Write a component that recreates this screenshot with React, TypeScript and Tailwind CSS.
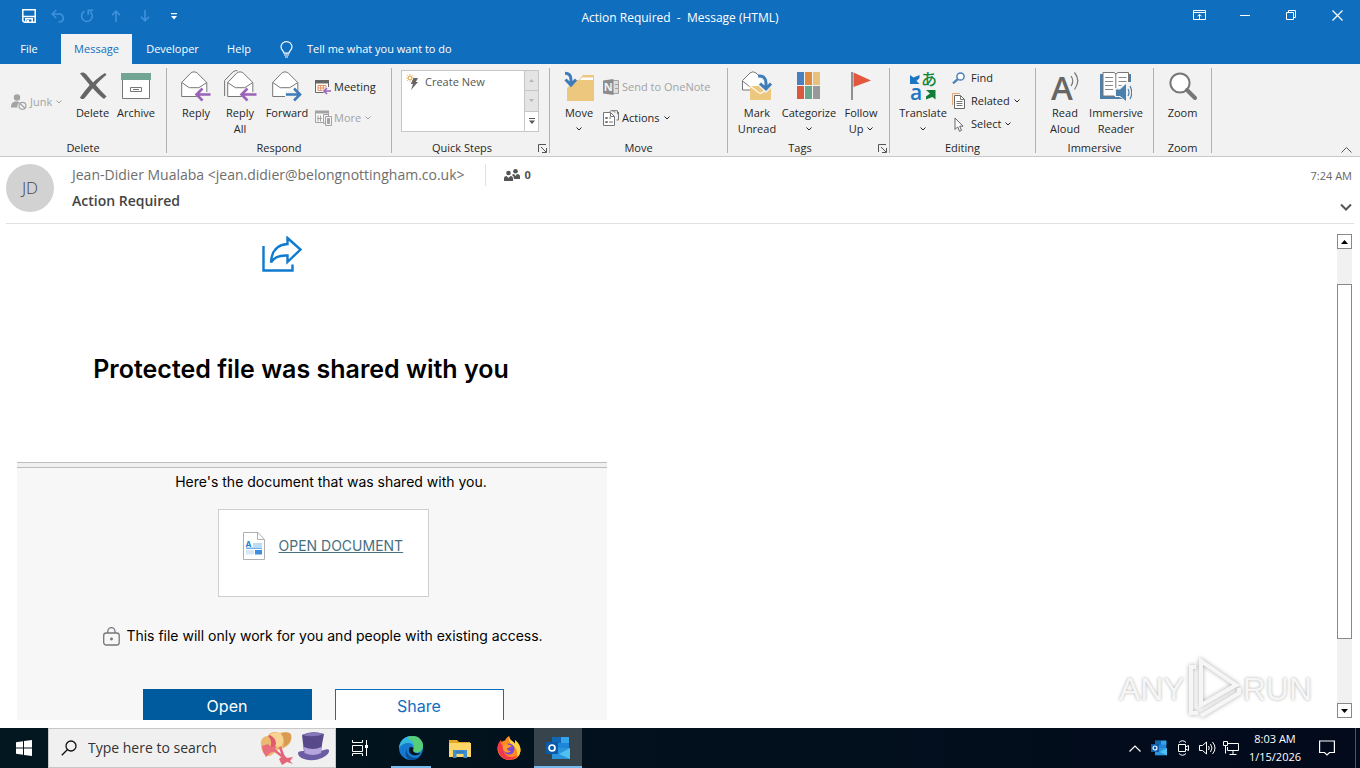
import React, { useState } from "react";
import clsx from "clsx";

interface IconProps {
  className?: string;
}

/* ---------- title bar icons ---------- */

const SaveIcon = () => (
  <svg width="14" height="14" viewBox="0 0 14 14" fill="none" stroke="#fff" strokeWidth="1.5">
    <path d="M.8.8h12.4v12.4H2.4L.8 11.8z" />
    <path d="M1 7.5h12" />
    <path d="M3.8 13V9.8h6.4V13" />
    <path d="M6 11v2" strokeWidth="2" />
  </svg>
);

const UndoIcon = () => (
  <svg width="14" height="14" viewBox="0 0 14 14" fill="none" stroke="#3f92da" strokeWidth="1.6">
    <path d="M5.2 1 1.2 5l4 4" />
    <path d="M1.5 5h7a4 4 0 0 1 1 7.8L7.5 13" />
  </svg>
);

const RedoIcon = () => (
  <svg width="14" height="14" viewBox="0 0 14 14" fill="none" stroke="#3f92da" strokeWidth="1.6">
    <path d="M4.6 2.2a5.4 5.4 0 1 0 5.6.6" />
    <path d="M8.2 6V1.4h5" />
  </svg>
);

const ArrowUp = () => (
  <svg width="10" height="12" viewBox="0 0 10 12" fill="none" stroke="#3f92da" strokeWidth="1.6">
    <path d="M5 12V1.5M1 5.2 5 1.2l4 4" />
  </svg>
);

const ArrowDown = () => (
  <svg width="10" height="12" viewBox="0 0 10 12" fill="none" stroke="#3f92da" strokeWidth="1.6">
    <path d="M5 0v10.5M1 6.8l4 4 4-4" />
  </svg>
);

const CustomizeIcon = () => (
  <svg width="6" height="7" viewBox="0 0 6 7">
    <path d="M0 0h6v1.2H0zM0 3h6L3 6.5z" fill="#fff" />
  </svg>
);

const BulbIcon = () => (
  <svg width="13" height="17" viewBox="0 0 13 17" fill="none" stroke="#fff" strokeWidth="1.2">
    <path d="M4 12.2c0-2.2-3-3.2-3-6.4a5.5 5.2 0 0 1 11 0c0 3.2-3 4.2-3 6.4z" />
    <path d="M4 14h5M5 16h3" />
  </svg>
);

/* ---------- ribbon icons ---------- */

const JunkIcon = () => (
  <svg width="16" height="16" viewBox="0 0 16 16">
    <circle cx="6" cy="3.5" r="3.2" fill="#a3a3a3" />
    <path d="M0 13.5C0 9 2 7.5 5.5 7.5c1.5 0 2.5.3 3.2.8A5 5 0 0 0 6.5 13.5z" fill="#a3a3a3" />
    <circle cx="11.5" cy="11.8" r="3.5" fill="#f2f2f2" stroke="#a3a3a3" strokeWidth="1.2" />
    <path d="m9 9.5 5 4.8" stroke="#a3a3a3" strokeWidth="1.2" />
  </svg>
);

const DeleteIcon = () => (
  <svg width="30" height="28" viewBox="0 0 30 28">
    <path
      d="M2 1.5C4-.2 6.500.5 8 2c2.5 3 4.500 5.800 7 8.500 3.500-3.200 7-6.500 12-9.500l1.500 1.800C24.500 6 21 9.300 17.800 13c3.200 3.800 6.700 7.500 10.700 11.500L26 27c-4.300-3.300-8-7-11.300-10.800-3 3.200-5.200 6.500-8.200 10-1.500 1.500-4.200.8-4.500-.7C5 21 8.500 17 11.700 13 8.500 9.200 5.500 5.200 2 1.500z"
      fill="#666"
    />
  </svg>
);

const ArchiveIcon = () => (
  <svg width="30" height="26" viewBox="0 0 30 26">
    <path d="M1.5 6.5h27v19h-27z" fill="#fff" stroke="#777" />
    <path d="M0 0h30v7H0z" fill="#72a594" />
    <path d="M9.5 14.5h11v4h-11zM12 16.5h6" fill="none" stroke="#777" />
  </svg>
);

const Envelope = () => (
  <>
    <path d="M.7 11.5 9.5 2.3c2-1.900 5-1.900 7 0l9.3 9.200v14H.7z" fill="#fff" stroke="#777" />
    <path d="m.7 11.5 7.600 5.200h9.500l8-5.200" fill="none" stroke="#777" />
  </>
);

const ReplyIcon = () => (
  <svg width="30" height="31" viewBox="0 0 30 31">
    <Envelope />
    <path d="M14 23.5 21 16v5h9v5h-9v5z" fill="#f2f2f2" />
    <path d="M29.5 23.5H16M21.5 17.5l-6 6 6 6" fill="none" stroke="#9a62b8" strokeWidth="2.6" />
  </svg>
);

const ReplyAllIcon = () => (
  <svg width="33" height="32" viewBox="0 0 33 32">
    <path d="M.6 26V10.5L9 1.8Q11 .2 13.5.7" fill="none" stroke="#777" />
    <g transform="translate(3 1)">
      <Envelope />
      <path d="M13 23.5 20 16v5h9v5h-9v5z" fill="#f2f2f2" />
    </g>
    <path d="M32.5 24.5H18M23.5 18.5l-6 6 6 6" fill="none" stroke="#9a62b8" strokeWidth="2.6" />
  </svg>
);

const ForwardIcon = () => (
  <svg width="30" height="31" viewBox="0 0 30 31">
    <Envelope />
    <path d="M30 23.5 22 16v4h-9v7h9v4z" fill="#f2f2f2" />
    <path d="M14 23.5h14M22 17.5l6 6-6 6" fill="none" stroke="#3f7cb8" strokeWidth="2.6" />
  </svg>
);

const MeetingIcon = () => (
  <svg width="16" height="15" viewBox="0 0 16 15">
    <path d="M.5 1.5h13v11H.5z" fill="#fff" stroke="#666" />
    <path d="M0 0h14v3.500H0z" fill="#666" />
    <path d="M3 5.500h8v5H3zM5.700 5.500v5M8.300 5.500v5M3 8h8" fill="none" stroke="#e08f5e" />
    <path d="M7 10.800 11 7h5v8h-5z" fill="#f2f2f2" />
    <path d="M16 11H9.200M12 8l-3 3 3 3" fill="none" stroke="#9a62b8" strokeWidth="1.6" />
  </svg>
);

const MoreIcon = () => (
  <svg width="17" height="16" viewBox="0 0 17 16" fill="none" stroke="#a3a3a3">
    <path d="M.5 1.5h13v11H.5z" fill="#f8f8f8" />
    <path d="M0 2h14" strokeWidth="3" />
    <path d="M3 5.500v6M5.500 5.500v6M2 8.500h5" />
    <path d="M8.500 4.500h5v9h-5z" fill="#f2f2f2" />
    <path d="M10.500 6.500h6v9h-6z" fill="#f2f2f2" />
    <path d="M12.500 8.500h2v5h-2z" fill="#a3a3a3" />
  </svg>
);

const QuickStepIcon = () => (
  <svg width="13" height="16" viewBox="0 0 13 16">
    <path d="M4 0v8M0 4h8M1.200 1.200l5.600 5.600M6.800 1.200 1.200 6.800" stroke="#e8b566" />
    <circle cx="4" cy="4" r="1.7" fill="#fff" stroke="#e8b566" />
    <path d="M7.500 4h4.500L9.800 8H12l-7 8 2-6H4.800z" fill="#666" />
  </svg>
);

const LauncherIcon = () => (
  <svg width="9" height="9" viewBox="0 0 9 9" fill="none" stroke="#555">
    <path d="M.5 8V.5H8M3 3l5 5M8.500 4v4.500H4" />
  </svg>
);

const MoveIcon = () => (
  <svg width="31" height="31" viewBox="0 0 31 31">
    <path d="M3 9h12l4-5h11v26H3z" fill="#edc77e" />
    <path d="M18 6.500h11V9H16z" fill="#fff" />
    <path d="M12 8 3 17v-7H0V0h10z" fill="#f2f2f2" />
    <path d="M1 2.300c4 0 6 2.500 6 6.500v4M1.500 8.500 7 14l5-5.500" fill="none" stroke="#3f7cb8" strokeWidth="3" />
  </svg>
);

const OneNoteIcon = () => (
  <svg width="16" height="16" viewBox="0 0 16 16">
    <path d="M9 1.500h6.500v13H9z" fill="#ddd" stroke="#a3a3a3" />
    <path d="M12 5.500h3.500M12 9.500h3.500" stroke="#a3a3a3" />
    <path d="M0 1.500 10.500 0v16L0 14.500z" fill="#8c8c8c" />
    <text x="5.200" y="12" textAnchor="middle" fontSize="11" fontWeight="700" fill="#f2f2f2">
      N
    </text>
  </svg>
);

const ActionsIcon = () => (
  <svg width="16" height="16" viewBox="0 0 16 16" fill="none" stroke="#777">
    <path d="M6 2.500c2-2.500 5-2.500 6 0M15.500 2v8h-2" />
    <path d="M9 .7h5.500V4" />
    <path d="M.5 2.500h7l4 4v9H.5z" fill="#fff" />
    <path d="M7.500 2.500v4h4" />
    <path d="M2.500 7.500h2v1h-2zM2.500 11.500h2v1h-2zM6 8h2M6 12h4" />
  </svg>
);

const MarkUnreadIcon = () => (
  <svg width="30" height="30" viewBox="0 0 30 30">
    <path d="M.5 9.500 8 2q3-2.500 6 0l9 8v9H.5z" fill="#fff" stroke="#777" />
    <path d="m.5 10 7 5.500H10" fill="none" stroke="#777" />
    <path d="M8 15h21v14H8z" fill="#edc77e" />
    <path d="m8 15 8.500 6.500q2 1.500 4 0L29 15" fill="none" stroke="#fff8e8" strokeWidth="1.5" />
    <path d="M16 5c5-.5 8 2 8 7v5M17.500 12.500l6.500 6 5.500-6" fill="none" stroke="#f2f2f2" strokeWidth="5" />
    <path d="M16 5c5-.5 8 2 8 7v4M18 12.500l6 5.500 5-5.500" fill="none" stroke="#3f7cb8" strokeWidth="3" />
  </svg>
);

const CategorizeIcon = () => (
  <svg width="24" height="28" viewBox="0 0 24 28">
    <path d="M0 0h7v13H0z" fill="#4a7fbd" />
    <path d="M8 0h7v13H8z" fill="#e08b3f" />
    <path d="M16 0h7v13h-7z" fill="#e8c27a" />
    <path d="M0 14h7v13H0z" fill="#d9583f" />
    <path d="M8 14h7v13H8z" fill="#69a58c" />
    <path d="M16 14h7v13h-7z" fill="#999" />
  </svg>
);

const FlagIcon = () => (
  <svg width="20" height="28" viewBox="0 0 20 28">
    <path d="M1 0v28" stroke="#777" strokeWidth="1.6" />
    <path d="M2.500.5 20 8.500 2.500 15z" fill="#e2573d" />
  </svg>
);

const TranslateIcon = () => (
  <svg width="28" height="32" viewBox="0 0 28 32" className="overflow-visible">
    <path d="m1 5 3.500 2.500L10.500 5v3L7.500 11l3 3H1z" fill="#1c74c4" />
    <path d="M17 20h9.500v9.500L23.500 27l-6.500 2.500v-3l4-3z" fill="#0f7f35" />
    <text x="1" y="30" fontSize="21" fontWeight="600" fill="#1c74c4">
      a
    </text>
    <text x="12" y="15" fontSize="16" fontFamily="Noto Sans CJK JP, sans-serif" fontWeight="500" fill="#17883c">
      あ
    </text>
  </svg>
);

const FindIcon = () => (
  <svg width="13" height="12" viewBox="0 0 13 12" fill="none" stroke="#4a7fbd">
    <circle cx="8.500" cy="4.500" r="3.6" fill="#fff" strokeWidth="1.5" />
    <path d="M5.800 7.200 1 11.300" strokeWidth="2.3" />
  </svg>
);

const RelatedIcon = () => (
  <svg width="13" height="16" viewBox="0 0 13 16" fill="none">
    <path d="M.5 12V.5H8" stroke="#e5a673" />
    <path d="M2.500 2.500h6l4 4v9h-10z" fill="#fff" stroke="#666" />
    <path d="M8.500 2.500v4h4M4.500 8.500h6M4.500 10.500h6M4.500 12.500h6" stroke="#777" />
  </svg>
);

const SelectIcon = () => (
  <svg width="13" height="15" viewBox="0 0 13 15" fill="#fff" stroke="#666">
    <path d="M3 1v11.500l2.700-2.700 1.800 4.500 2-.9-1.800-4.200H11z" />
  </svg>
);

const ReadAloudIcon = () => (
  <svg width="28" height="29" viewBox="0 0 28 29" className="overflow-visible">
    <text x="0" y="28" fontSize="33" fontWeight="600" fill="#666">
      A
    </text>
    <path d="M20 4q3.500 5 0 10M23.500.5q6.500 8 0 17" fill="none" stroke="#777" strokeWidth="1.2" />
  </svg>
);

const ImmersiveIcon = () => (
  <svg width="32" height="29" viewBox="0 0 32 29">
    <path d="M0 2h31v25H0z" fill="#4a7fae" />
    <path d="M3 .5h11l2 1.500 2-1.500h10.500V24H18l-2 1.500L14 24H3z" fill="#fff" stroke="#777" />
    <path d="M15.800 2v23" stroke="#777" />
    <path d="M5 5.500h8M5 9.500h8M5 13.500h8M5 17.500h8M18.500 5.500h8M18.500 9.500h8M18.500 13.500h3" stroke="#888" />
    <path d="M15 16h4l8-6h5v19h-5l-8-4h-4z" fill="#f2f2f2" />
    <path d="M16 17.500h4l6-5.500v17l-6-5h-4z" fill="#4a7fae" />
    <path d="M28 17q2 3.500 0 7M30 14q3.500 6.500 0 13" fill="none" stroke="#4a7fae" strokeWidth="1.2" />
  </svg>
);

const ZoomIcon = () => (
  <svg width="28" height="28" viewBox="0 0 28 28">
    <circle cx="11" cy="11" r="9.600" fill="#fff" stroke="#777" strokeWidth="2" />
    <path d="m18 18 8 8" stroke="#777" strokeWidth="4" strokeLinecap="round" />
  </svg>
);

const Chevron = ({ className }: IconProps) => (
  <svg width="6" height="4" viewBox="0 0 6 4" fill="none" stroke="currentColor" className={className}>
    <path d="m.5.5 2.500 2.500L5.500.5" />
  </svg>
);

/* ---------- ribbon building blocks ---------- */

interface RibbonGroupProps {
  label: string;
  className: string;
  launcher?: boolean;
  children: React.ReactNode;
}

const RibbonGroup = ({ label, className, launcher, children }: RibbonGroupProps) => (
  <section
    aria-label={label}
    className={clsx("flex shrink-0 flex-col justify-between border-r border-[#b1b1b1] pt-0.5", className)}
  >
    <div className="flex items-start">{children}</div>
    <div className="flex items-center leading-[10px]">
      <span className="flex-1 text-center">{label}</span>
      {launcher && (
        <button aria-label={`${label} options`} className="w-[17px] pl-1.5">
          <LauncherIcon />
        </button>
      )}
    </div>
  </section>
);

interface BigButtonProps {
  icon: React.ReactNode;
  lines: string[];
  className: string;
  menu?: boolean;
}

const BigButton = ({ icon, lines, className, menu }: BigButtonProps) => (
  <button className={clsx("flex shrink-0 flex-col items-center gap-[3px] leading-4", className)}>
    <span className="flex h-8 items-center justify-center">{icon}</span>
    <span className="flex flex-col items-center">
      {lines.map((line, index) => (
        <span key={line} className="flex items-center gap-1 whitespace-nowrap">
          {line}
          {menu && lines.length > 1 && index === lines.length - 1 && <Chevron />}
        </span>
      ))}
      {menu && lines.length === 1 && (
        <span className="flex h-4 items-center">
          <Chevron />
        </span>
      )}
    </span>
  </button>
);

interface SmallButtonProps {
  icon: React.ReactNode;
  label: string;
  menu?: boolean;
  disabled?: boolean;
}

const SmallButton = ({ icon, label, menu, disabled }: SmallButtonProps) => (
  <button
    disabled={disabled}
    className={clsx("flex items-center whitespace-nowrap leading-4", disabled && "text-[#a3a3a3]")}
  >
    <span className="flex w-[19px] shrink-0">{icon}</span>
    {label}
    {menu && <Chevron className="ml-1" />}
  </button>
);

const TitleBar = () => {
  const quickAccess = [
    { name: "Save", icon: <SaveIcon /> },
    { name: "Undo", icon: <UndoIcon /> },
    { name: "Redo", icon: <RedoIcon /> },
    { name: "Previous item", icon: <ArrowUp /> },
    { name: "Next item", icon: <ArrowDown /> },
    { name: "Customize toolbar", icon: <CustomizeIcon /> },
  ];

  return (
    <div className="grid h-[34px] grid-cols-[1fr_auto_1fr] bg-[#106ebe] text-white">
      <div className="flex h-8 pl-3.5">
        {quickAccess.map((item) => (
          <button key={item.name} aria-label={item.name} className="flex w-[29px] items-center justify-center">
            {item.icon}
          </button>
        ))}
      </div>
      <h1 className="whitespace-pre text-xs leading-9">Action Required  -  Message (HTML)</h1>
      <div className="flex h-[30px] justify-end">
        <button aria-label="Ribbon display options" className="flex w-[46px] items-center justify-center">
          <svg width="13" height="10" viewBox="0 0 13 10" fill="none" stroke="#fff">
            <path d="M.5.5h12v9H.5zM.5 2.500h12M6.500 9V4.500M4.500 6.300l2-2 2 2" />
          </svg>
        </button>
        <button aria-label="Minimize" className="flex w-[46px] items-center justify-center">
          <span className="h-px w-2.5 bg-white"></span>
        </button>
        <button aria-label="Restore" className="flex w-[46px] items-center justify-center">
          <svg width="10" height="10" viewBox="0 0 10 10" fill="none" stroke="#fff">
            <path d="M.5 2.500h7v7h-7zM2.500 2.500v-2h7v7h-2" />
          </svg>
        </button>
        <button aria-label="Close" className="flex w-[46px] items-center justify-center">
          <svg width="11" height="11" viewBox="0 0 11 11" fill="none" stroke="#fff" strokeWidth="1.2">
            <path d="m.5.5 10 10M10.500.5l-10 10" />
          </svg>
        </button>
      </div>
    </div>
  );
};

const TabBar = () => {
  const [active, setActive] = useState("Message");
  const tabs = [
    { name: "File", width: "w-[58px] mr-[3px]" },
    { name: "Message", width: "w-[71px]" },
    { name: "Developer", width: "w-[81px]" },
    { name: "Help", width: "w-[52px]" },
  ];

  return (
    <nav className="flex h-[30px] bg-[#106ebe] text-white">
      {tabs.map((tab) => (
        <button
          key={tab.name}
          onClick={() => setActive(tab.name)}
          className={clsx(tab.width, active === tab.name && "bg-[#f2f2f2] text-[#106ebe]")}
        >
          {tab.name}
        </button>
      ))}
      <label className="ml-[15px] flex items-center gap-3.5">
        <BulbIcon />
        <input
          aria-label="Tell me what you want to do"
          placeholder="Tell me what you want to do"
          className="w-44 bg-transparent placeholder:text-white placeholder:opacity-100 focus:outline-none"
        />
      </label>
    </nav>
  );
};

const Ribbon = () => (
  <div className="flex h-[93px] items-stretch border-b border-[#c8c8c8] bg-[#f2f2f2] pb-[3px] pt-1 text-[#262626]">
    <RibbonGroup label="Delete" className="w-[167px]">
      <div className="flex h-16 w-[71px] shrink-0 items-center pl-[11px]">
        <SmallButton icon={<JunkIcon />} label="Junk" menu disabled />
      </div>
      <BigButton icon={<DeleteIcon />} lines={["Delete"]} className="w-[43px]" />
      <BigButton icon={<ArchiveIcon />} lines={["Archive"]} className="w-11" />
    </RibbonGroup>

    <RibbonGroup label="Respond" className="w-[225px]">
      <div className="flex pl-[7px]">
        <BigButton icon={<ReplyIcon />} lines={["Reply"]} className="w-11" />
        <BigButton icon={<ReplyAllIcon />} lines={["Reply", "All"]} className="w-11" />
        <BigButton icon={<ForwardIcon />} lines={["Forward"]} className="w-[50px]" />
      </div>
      <div className="flex flex-col gap-[15px] pl-[3px] pt-[9px]">
        <SmallButton icon={<MeetingIcon />} label="Meeting" />
        <SmallButton icon={<MoreIcon />} label="More" menu disabled />
      </div>
    </RibbonGroup>

    <RibbonGroup label="Quick Steps" className="w-[158px]" launcher>
      <div className="ml-[9px] flex h-[62px] w-[138px] border border-[#c6c6c6] bg-white">
        <button className="flex h-[22px] flex-1 items-center gap-1.5 pl-1 text-[#555]">
          <QuickStepIcon />
          Create New
        </button>
        <div className="flex w-3.5 flex-col divide-y divide-[#c6c6c6] border-l border-[#c6c6c6] text-[#666]">
          <button aria-label="Previous row" className="flex flex-1 items-center justify-center bg-[#e4e4e4]">
            <svg width="5" height="3" viewBox="0 0 5 3">
              <path d="M0 3 2.500 0 5 3z" fill="#b5b5b5" />
            </svg>
          </button>
          <button aria-label="Next row" className="flex flex-1 items-center justify-center bg-[#e4e4e4]">
            <svg width="5" height="3" viewBox="0 0 5 3">
              <path d="m0 0 2.500 3L5 0z" fill="#b5b5b5" />
            </svg>
          </button>
          <button aria-label="More quick steps" className="flex flex-1 items-center justify-center">
            <svg width="6" height="6" viewBox="0 0 6 6">
              <path d="M0 0h6v1H0zM0 2.500h6L3 6z" fill="#555" />
            </svg>
          </button>
        </div>
      </div>
    </RibbonGroup>

    <RibbonGroup label="Move" className="w-[178px]">
      <div className="flex pl-[7px]">
        <BigButton icon={<MoveIcon />} lines={["Move"]} className="w-11" menu />
      </div>
      <div className="flex flex-col gap-[15px] pl-0.5 pt-[9px]">
        <SmallButton icon={<OneNoteIcon />} label="Send to OneNote" disabled />
        <SmallButton icon={<ActionsIcon />} label="Actions" menu />
      </div>
    </RibbonGroup>

    <RibbonGroup label="Tags" className="w-[162px]" launcher>
      <div className="flex pl-[7px]">
        <BigButton icon={<MarkUnreadIcon />} lines={["Mark", "Unread"]} className="w-11" />
        <BigButton icon={<CategorizeIcon />} lines={["Categorize"]} className="w-[60px]" menu />
        <BigButton icon={<FlagIcon />} lines={["Follow", "Up"]} className="w-11" menu />
      </div>
    </RibbonGroup>

    <RibbonGroup label="Editing" className="w-[146px]">
      <div className="flex pl-[7px]">
        <BigButton icon={<TranslateIcon />} lines={["Translate"]} className="w-[52px]" menu />
      </div>
      <div className="flex flex-col gap-[7px] pl-[3px]">
        <SmallButton icon={<FindIcon />} label="Find" />
        <SmallButton icon={<RelatedIcon />} label="Related" menu />
        <SmallButton icon={<SelectIcon />} label="Select" menu />
      </div>
    </RibbonGroup>

    <RibbonGroup label="Immersive" className="w-[118px]">
      <div className="flex pl-[7px]">
        <BigButton icon={<ReadAloudIcon />} lines={["Read", "Aloud"]} className="w-11" />
        <BigButton icon={<ImmersiveIcon />} lines={["Immersive", "Reader"]} className="w-[58px]" />
      </div>
    </RibbonGroup>

    <RibbonGroup label="Zoom" className="w-[58px]">
      <BigButton icon={<ZoomIcon />} lines={["Zoom"]} className="w-full" />
    </RibbonGroup>

    <button aria-label="Collapse the ribbon" className="ml-auto self-end pr-2">
      <svg width="11" height="6" viewBox="0 0 11 6" fill="none" stroke="#555">
        <path d="m.5 5.500 5-5 5 5" />
      </svg>
    </button>
  </div>
);

const MessageHeader = () => (
  <header className="mx-1.5 flex h-[67px] border-b border-[#e1e1e1] pt-[7px]">
    <div className="flex size-12 items-center justify-center rounded-full bg-[#d2d2d2] text-[17px] font-light text-[#444]">
      JD
    </div>
    <div className="ml-[18px]">
      <div className="flex items-center">
        <span className="text-sm leading-[22px] text-[#6e6e6e]">
          Jean-Didier Mualaba &lt;jean.didier@belongnottingham.co.uk&gt;
        </span>
        <button className="ml-5 flex items-center gap-1 border-l border-[#e1e1e1] pl-[18px] font-bold leading-[22px] text-[#555]">
          <svg width="17" height="12" viewBox="0 0 17 12" fill="#555">
            <circle cx="4.500" cy="4" r="2.3" />
            <path d="M0 12V9.500Q0 7 2.500 7L4.500 9l2-2Q9 7 9 9.500V12z" />
            <circle cx="11.500" cy="2.300" r="2.3" />
            <path d="M8 6q1-1 2-1l1.500 2L13 5q3 0 3 2.500V10h-6Q10 7 8 6z" />
          </svg>
          0
        </button>
      </div>
      <h2 className="pt-[3px] text-sm font-semibold leading-6 text-[#444]">Action Required</h2>
    </div>
    <div className="ml-auto flex flex-col items-end justify-between pb-3 pr-0.5 text-[#666]">
      <time className="leading-6">7:24 AM</time>
      <button aria-label="Expand header">
        <svg width="12" height="8" viewBox="0 0 12 8" fill="none" stroke="#555" strokeWidth="2">
          <path d="m1 1.500 5 5 5-5" />
        </svg>
      </button>
    </div>
  </header>
);

const ShareIcon = () => (
  <svg width="40" height="36" viewBox="0 0 40 36" fill="none" stroke="#0f7bd0" strokeWidth="2.4">
    <path d="M1.500 10v24.500h29v-6" />
    <path d="M25.500 2 38.500 13.500l-13 12.500v-6.500C17 19 12 21 9 26.500 9.500 15 15.500 8.500 25.500 8z" />
  </svg>
);

const DocumentIcon = () => (
  <svg width="22" height="28" viewBox="0 0 22 28">
    <path d="M.5.5h14.500l6.500 7v20H.5z" fill="#fff" stroke="#b0b0b0" />
    <path d="M14.500.5v7h7" fill="none" stroke="#b0b0b0" />
    <text x="2.500" y="15" fontSize="8" fontWeight="700" fill="#1e7fd0">
      A
    </text>
    <path d="M10 11h9v4h-9z" fill="#bcdcf7" />
    <path d="M3 15.500h16V17H3z" fill="#6fb1ea" />
    <path d="M3 18h8v4.500H3z" fill="#d8e8f5" />
    <path d="M12 18h7v4.500h-7z" fill="#3f8edb" />
  </svg>
);

const LockIcon = () => (
  <svg width="17" height="19" viewBox="0 0 17 19" fill="none" stroke="#777" strokeWidth="1.3">
    <rect x=".7" y="6" width="15.500" height="12" rx="2.500" />
    <path d="M4.800 6V4.200a3.600 3.600 0 0 1 7.200 0V6" />
    <circle cx="8.500" cy="12" r=".8" fill="#555" />
  </svg>
);

const MessageBody = () => (
  <article className="flex-1 overflow-hidden pl-[17px] pt-3 font-[Inter,sans-serif] text-black">
    <div className="w-[590px]">
      <div className="flex h-9 w-[530px] justify-center">
        <ShareIcon />
      </div>
      <h2 className="mt-[81px] w-[568px] text-center text-[25px] font-semibold leading-8">
        Protected file was shared with you
      </h2>
      <div className="mt-[77px] h-1.5 border-y border-[#bdbdbd] bg-[#f0f0f0]"></div>
      <div className="flex flex-col items-center bg-[#f7f7f7] pb-10 pl-[22px] text-[14px]">
        <p className="pl-4 pt-1 leading-5">Here's the document that was shared with you.</p>
        <div className="mt-[17px] flex h-[88px] w-[211px] items-start gap-3.5 border border-[#cfcfcf] bg-white pl-6 pt-[22px]">
          <DocumentIcon />
          <a href="#" className="leading-7 text-[#48707f] underline">
            OPEN DOCUMENT
          </a>
        </div>
        <p className="mt-[29px] flex items-center gap-1.5 leading-5">
          <LockIcon />
          This file will only work for you and people with existing access.
        </p>
        <div className="mt-[43px] flex gap-[23px] text-[16px]">
          <button className="h-9 w-[169px] bg-[#005a9e] pb-0.5 text-white">Open</button>
          <button className="h-9 w-[169px] border border-[#106ebe] bg-white pb-0.5 text-[#106ebe]">Share</button>
        </div>
      </div>
    </div>
  </article>
);

const Scrollbar = () => (
  <div className="mb-0.5 mr-2 mt-2.5 flex w-[15px] flex-col bg-[#f1f1f1]">
    <button aria-label="Scroll up" className="flex size-[15px] items-center justify-center border border-[#888] bg-white">
      <svg width="7" height="4" viewBox="0 0 7 4">
        <path d="M0 4 3.500 0 7 4z" />
      </svg>
    </button>
    <div className="mt-[35px] flex-1 border border-[#888] bg-white"></div>
    <button
      aria-label="Scroll down"
      className="mt-16 flex size-[15px] items-center justify-center border border-[#888] bg-white"
    >
      <svg width="7" height="4" viewBox="0 0 7 4">
        <path d="m0 0 3.500 4L7 0z" />
      </svg>
    </button>
  </div>
);

const Watermark = () => (
  <div className="pointer-events-none absolute bottom-0 right-12 flex items-center font-['Liberation_Sans',sans-serif] text-[32px] leading-[62px] text-[#f6f6f6] text-shadow-[0_0_3px_#aaa]">
    <span>ANY</span>
    <svg
      width="58"
      height="62"
      viewBox="-2 0 58 62"
      fill="none"
      stroke="#f6f6f6"
      strokeWidth="4"
      className="drop-shadow-[0_0_2px_#aaa]"
    >
      <path d="M14 3v44l35-20z" />
      <path d="M9 9H4v46h7M14 58l38-23v-5" />
    </svg>
    <span>RUN</span>
  </div>
);

/* ---------- taskbar ---------- */

const OutlookIcon = ({ className }: IconProps) => (
  <svg viewBox="0 0 24 22" className={className}>
    <path d="M6 0h17v12H6z" fill="#1e86d8" />
    <path d="M6 0h9v6H6z" fill="#1068b5" />
    <path d="M15 0h8v6h-8z" fill="#35a3ea" />
    <path d="M6 11h18v11H6z" fill="#2a93dc" />
    <path d="m24 11-11 6 11 5z" fill="#50c0f2" />
    <path d="M0 5h12v12H0z" fill="#0a5cab" />
    <circle cx="6" cy="11" r="3" fill="none" stroke="#fff" strokeWidth="1.7" />
  </svg>
);

const HatsArt = () => (
  <svg width="71" height="34" viewBox="0 0 71 34">
    <path d="M1 14C0 8 4 5 8 5c1-4 7-5 12-3 4-2 10-1 11 2 2 5-2 12-10 14-6 1-8 7-12 7S1 20 1 14z" fill="#ecb970" />
    <path d="M9 5c2-4 8-4 12-2 3 2 3 7 1 11-3 3-8 2-9-2-1-3-2-5-4-7z" fill="#f7d493" />
    <path d="M21 3c4-2 9-2 10 1 1 5-2 10-8 12 2-5 1-9-2-13z" fill="#d99a52" />
    <path d="M10 4q6 3 6 9l-3 6-3-2q3-7-2-12z" fill="#e2596b" />
    <path d="m2 15 6-2 3 3 5-1-1 5-5 2-4 4-3-5z" fill="#ea6d7e" />
    <path d="m14 19 13 10M20 16l4 11" stroke="#e56578" strokeWidth="2.500" />
    <path d="m19 28 5-4 3 3 6-1-3 4 3 3-6-2-5 3z" fill="#e56578" />
    <path d="M38 22q0-2 5-2h18q7-3 8-1 1 4-7 8-9 4-18 1-6-2-6-6z" fill="#6c5ca4" />
    <path d="M42 4q10-5 22-1-2 9-3 18-7 5-17 0z" fill="#57498a" />
    <path d="M42 4q10-5 22-1-10 4-22 1z" fill="#8577b8" />
    <path d="M44 16q9 4 17.500 0l-.5 6q-8 4-16.500 0z" fill="#b5a4dd" />
  </svg>
);

const EdgeIcon = () => (
  <svg width="24" height="24" viewBox="0 0 24 24">
    <circle cx="12" cy="12" r="12" fill="#1479cf" />
    <path d="M1 8C4 1 9 0 13 0c7 0 11 5 11 10 0 4-3 6.500-6.500 6.500-3 0-4-1.300-3-3 1-3-1-6.500-5-6.500C5 7 2 9 0 12q0-2 1-4z" fill="#35b8d8" />
    <path d="M14 0c6 0 10 5 10 10 0 4-3 6.500-6.500 6.500-3 0-4-1.300-3-3C16 9 15 4 8 2q3-2 6-2z" fill="#56cd77" />
    <path d="M8 13c-1 5 3 9 8 9 2 0 4-.5 5.500-1.800A12 12 0 0 1 12 24C7 23 5 18 8 13z" fill="#0b4f96" />
    <path d="M10.500 11.500q3-1.500 4 1-1.500 3 1.500 4.300 3 1 6 0-3 3-7 2.500c-4-.5-6-4.500-4.500-7.800z" fill="#04161f" />
  </svg>
);

const ExplorerIcon = () => (
  <svg width="22" height="19" viewBox="0 0 22 19">
    <path d="M0 1h8l2 2h11v5H0z" fill="#e5a822" />
    <path d="M0 4h22v14H0z" fill="#fcd669" />
    <path d="M4 11h14v8h-3.500v-4h-7v4H4z" fill="#3f8fcf" />
    <path d="M7 13h8" stroke="#2c6ca8" />
  </svg>
);

const FirefoxIcon = () => (
  <svg width="24" height="24" viewBox="0 0 24 24">
    <path d="M12 24A11.500 11.500 0 0 1 1 9q1-3 3-5l.5 2Q6 4.500 8 4.500 9 1.500 12 0q0 3 3 5 2 1 3 3V4q6 5 5.500 11-1 9-11.500 9z" fill="#ff8a1f" />
    <path d="M12 0q0 3 3 5 2 1 3 3V4q6 5 5.500 11-.5 4-3.500 6 1-9-5-12-4-3-3-9z" fill="#ffd23f" />
    <path d="M1 9q-1 11 8 14.500Q17 25 21 19q-6 4-11 1-5-4-3-10Q3 9 4 4 2 6 1 9z" fill="#f4364c" />
    <circle cx="12" cy="13" r="5.500" fill="#7b49d6" />
    <path d="M6 9q3-2 6 0 2 0 3 1-3 2-5 2 0 3 4 3-4 3-7 0-2-3-1-6z" fill="#ff9a2a" />
  </svg>
);

const Taskbar = () => (
  <footer className="flex h-10 shrink-0 bg-linear-to-r from-[#02171f] to-[#020a1b] text-white">
    <button aria-label="Start" className="flex w-12 items-center justify-center">
      <svg width="16" height="16" viewBox="0 0 16 16" fill="#fff">
        <path d="m0 2.200 7-1v6.300H0zM8 1l8-1v7.500H8zM0 8.500h7v6.300l-7-1zM8 8.500h8V16l-8-1z" />
      </svg>
    </button>
    <label className="flex w-72 items-center border border-[#c8c8c8] bg-[#f0f0f0] pl-3 pr-1">
      <svg width="16" height="16" viewBox="0 0 16 16" fill="none" stroke="#111" strokeWidth="1.3">
        <circle cx="10" cy="6" r="5" />
        <path d="M6.500 9.500.8 15.200" />
      </svg>
      <input
        aria-label="Type here to search"
        placeholder="Type here to search"
        className="ml-[11px] min-w-0 flex-1 bg-transparent text-sm text-black placeholder:text-[#333] placeholder:opacity-100 focus:outline-none"
      />
      <HatsArt />
    </label>
    <button aria-label="Task view" className="flex w-[51px] items-center justify-center pr-[3px]">
      <svg width="17" height="16" viewBox="0 0 17 16" fill="none" stroke="#fff">
        <path d="M.5 0v2.500h10V0M.5 5.500h10v6H.5zM.5 16v-2.500h10V16M14.500 0v16" />
        <path d="M13 5h3v3h-3z" fill="#fff" stroke="none" />
      </svg>
    </button>
    <div className="flex gap-px">
      <button aria-label="Microsoft Edge" className="flex w-12 flex-col items-center justify-between pt-2">
        <EdgeIcon />
        <span className="h-0.5 w-10 bg-[#76b9ed]"></span>
      </button>
      <button aria-label="File Explorer" className="flex w-12 items-center justify-center">
        <ExplorerIcon />
      </button>
      <button aria-label="Firefox" className="flex w-12 items-center justify-center">
        <FirefoxIcon />
      </button>
      <button aria-label="Outlook" className="flex w-12 flex-col items-center justify-between bg-[#37444c] pt-[9px]">
        <OutlookIcon className="h-[22px] w-6" />
        <span className="h-0.5 w-full bg-[#76b9ed]"></span>
      </button>
    </div>

    <div className="ml-auto flex items-center">
      <button aria-label="Show hidden icons" className="flex w-6 justify-center">
        <svg width="12" height="7" viewBox="0 0 12 7" fill="none" stroke="#fff" strokeWidth="1.2">
          <path d="m.5 6.500 5.500-5.500 5.500 5.500" />
        </svg>
      </button>
      <button aria-label="Outlook notifications" className="flex w-6 justify-center">
        <OutlookIcon className="h-4 w-4" />
      </button>
      <button aria-label="Meet now" className="flex w-6 justify-center">
        <svg width="13" height="16" viewBox="0 0 13 16" fill="none" stroke="#fff">
          <path d="M1.500 4.500h7v7h-7zM8.500 7l3-1.500v5L8.500 9M2 2.500q3.500-3.500 7 0M2 13.500q3.500 3.500 7 0" />
        </svg>
      </button>
      <button aria-label="Volume" className="flex w-6 justify-center">
        <svg width="17" height="14" viewBox="0 0 17 14" fill="none" stroke="#fff">
          <path d="M.5 4.500h3l4-3.500v12l-4-3.500h-3zM9.500 5q1.500 2 0 4M11.500 3q3 4 0 8M13.500 1q5 6 0 12" />
        </svg>
      </button>
      <button aria-label="Network" className="flex w-6 justify-center">
        <svg width="16" height="14" viewBox="0 0 16 14" fill="none" stroke="#fff">
          <path d="M5 2.500h10.500v7h-11V6M10 9.500v3.500M6.500 13.500h7M.5.5h4v4h-4zM2.500 4.500v8" />
        </svg>
      </button>
      <time className="w-16 text-center leading-[18px]">
        8:03 AM
        <br />
        1/15/2026
      </time>
      <button aria-label="Notifications" className="flex w-10 justify-center">
        <svg width="16" height="16" viewBox="0 0 16 16" fill="none" stroke="#fff" strokeWidth="1.2">
          <path d="M.6 1h14.800v11.500H10.500L8 15l-2.500-2.500H.6z" />
        </svg>
      </button>
      <div className="ml-2 h-10 w-[5px] border-l border-[#4a5560]"></div>
    </div>
  </footer>
);

const App = () => {
  return (
    <div className="flex h-screen flex-col overflow-hidden bg-white font-['Open_Sans',sans-serif] text-[11px]">
      <TitleBar />
      <TabBar />
      <Ribbon />
      <MessageHeader />
      <main className="flex min-h-0 flex-1 pb-2">
        <div className="relative flex min-w-0 flex-1">
          <MessageBody />
          <Scrollbar />
          <Watermark />
        </div>
      </main>
      <Taskbar />
    </div>
  );
};

export default App;
